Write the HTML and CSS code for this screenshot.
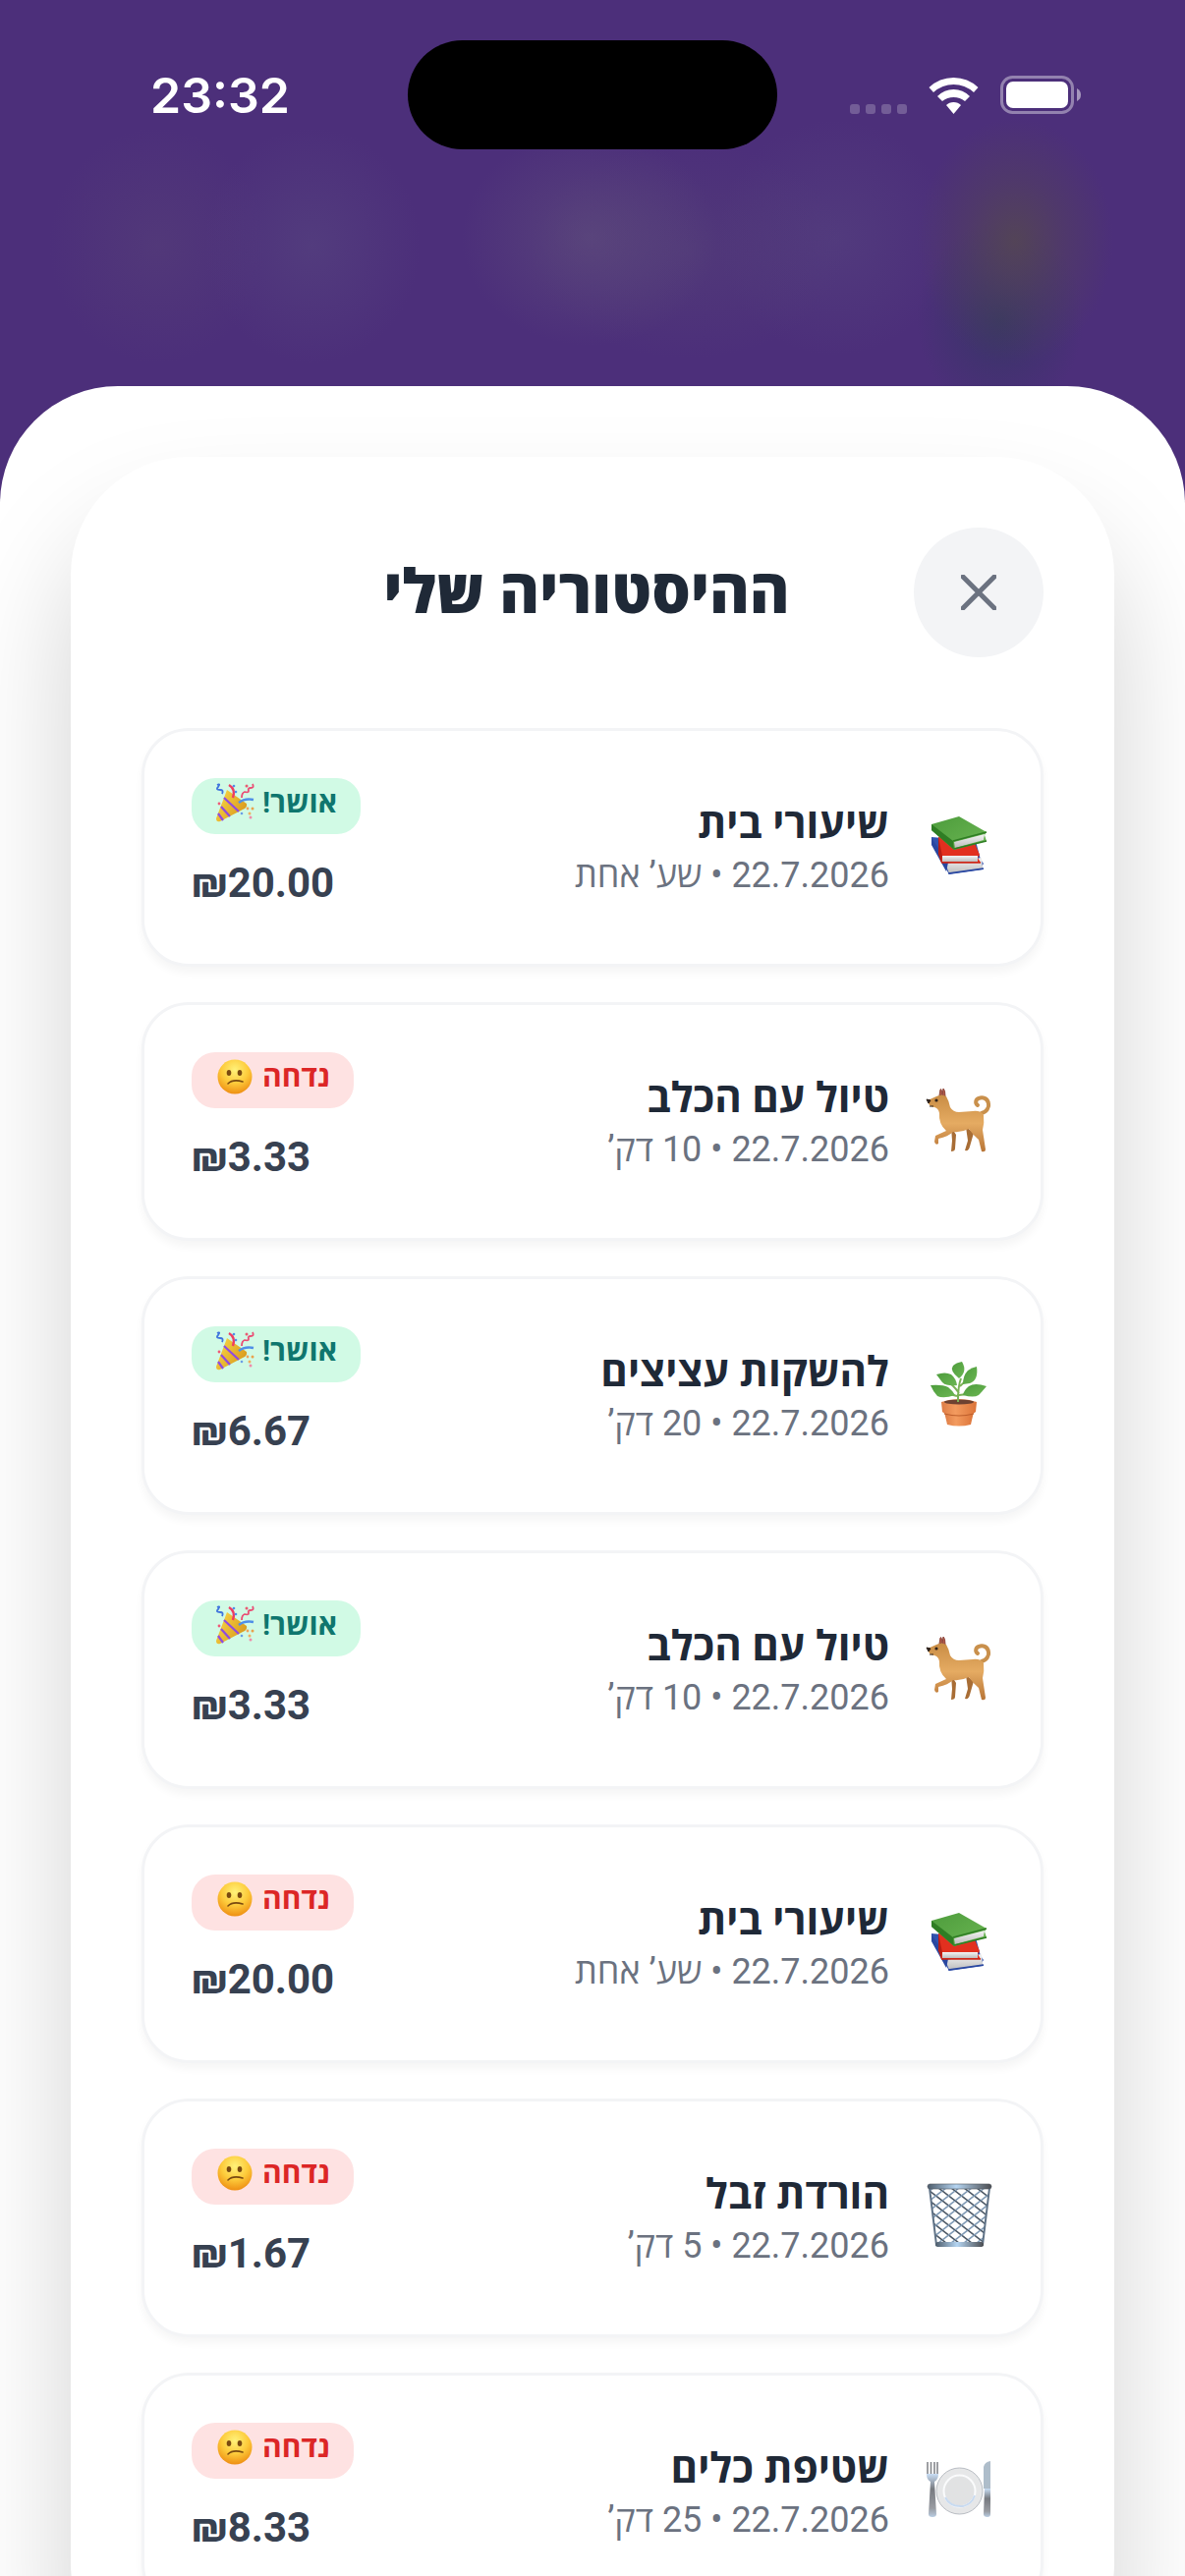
FILE: index.html
```
<!DOCTYPE html>
<html lang="he" dir="rtl">
<head>
    <meta charset="UTF-8">
    <meta name="viewport" content="width=device-width, initial-scale=1.0">
    <title>ההיסטוריה שלי</title>
    <link rel="stylesheet" href="styles.css">
</head>
<body>

<!-- Shared icons -->
<svg class="icon-defs" aria-hidden="true">
    <defs>
        <linearGradient id="gDog" x1="0" y1="0" x2="0" y2="1">
            <stop offset="0" stop-color="#c98d45"/>
            <stop offset="0.5" stop-color="#e5ab62"/>
            <stop offset="1" stop-color="#b87537"/>
        </linearGradient>
        <linearGradient id="gGreen" x1="0" y1="0" x2="1" y2="1">
            <stop offset="0" stop-color="#4d9c3c"/>
            <stop offset="1" stop-color="#6bb653"/>
        </linearGradient>
        <linearGradient id="gPages" x1="0" y1="0" x2="0" y2="1">
            <stop offset="0" stop-color="#f4f4f4"/>
            <stop offset="1" stop-color="#bdbdbd"/>
        </linearGradient>
        <linearGradient id="gPot" x1="0" y1="0" x2="1" y2="0">
            <stop offset="0" stop-color="#dd7c45"/>
            <stop offset="0.4" stop-color="#f39b5f"/>
            <stop offset="1" stop-color="#dc7439"/>
        </linearGradient>
        <linearGradient id="gMetal" x1="0" y1="0" x2="1" y2="0">
            <stop offset="0" stop-color="#4d5c6b"/>
            <stop offset="0.45" stop-color="#b5d5f2"/>
            <stop offset="1" stop-color="#4a4c50"/>
        </linearGradient>
        <linearGradient id="gHandle" x1="0" y1="0" x2="0" y2="1">
            <stop offset="0" stop-color="#c9def5"/>
            <stop offset="0.35" stop-color="#777a80"/>
            <stop offset="0.8" stop-color="#999ca2"/>
            <stop offset="1" stop-color="#b9cde2"/>
        </linearGradient>
        <radialGradient id="gFace" cx="0.5" cy="0.3" r="0.7">
            <stop offset="0" stop-color="#fff27a"/>
            <stop offset="0.55" stop-color="#fdcb3b"/>
            <stop offset="1" stop-color="#ee8f13"/>
        </radialGradient>
        <linearGradient id="gCone" x1="0" y1="0" x2="1" y2="0.6">
            <stop offset="0" stop-color="#fbdc4a"/>
            <stop offset="1" stop-color="#d99a1d"/>
        </linearGradient>
        <pattern id="gMesh" width="13" height="10" patternUnits="userSpaceOnUse">
            <path d="M0 0L13 10" stroke="#4c5865" stroke-width="1.6"/>
            <path d="M13 0L0 10" stroke="#7f9ab5" stroke-width="1.6"/>
        </pattern>
    </defs>

    <symbol id="books" viewBox="0 6 110 110">
        <path d="M28 50L73 54L78 73L81 77L79 80L81 83L46 88L28 57Z" fill="#3252ad"/>
        <path d="M42 77L79 71L80 82L46 87Z" fill="url(#gPages)"/>
        <path d="M28 51L45 76L43 85L28 58Z" fill="#2947a0"/>
        <path d="M45 87L81 82" stroke="#2947a0" stroke-width="1.5"/>
        <path d="M35 50L71 54L77 68L75 71L78 76L38 76L35 66Z" fill="#e2301f"/>
        <path d="M39 69H75V75H39Z" fill="url(#gPages)"/>
        <path d="M35 50L39 69L38 76L35 67Z" fill="#b71d14"/>
        <path d="M38 76H78" stroke="#c92417" stroke-width="1.5"/>
        <path d="M28 37L56 29L84 45L82 48L84 54L51 63L28 43Z" fill="url(#gGreen)"/>
        <path d="M51 55L82 47L81 53L52 61Z" fill="url(#gPages)"/>
        <path d="M28 37L50 54L51 63L28 43Z" fill="#2f7d24"/>
        <path d="M50 54L84 45M51 62L84 54" stroke="#2f7d24" stroke-width="1.5" fill="none"/>
    </symbol>

    <symbol id="dog" viewBox="0 6 110 110">
        <path d="M79 52C84 51 87 46 86 42C85 37 80 35 76 37C73 38 72 42 75 44" fill="none" stroke="#c9904c" stroke-width="4" stroke-linecap="round"/>
        <path d="M36 34L37 28Q38 26 39 33ZM39 34L40 27Q42 28 42 35Z" fill="#b25a49" stroke="#8e463b" stroke-width="1"/>
        <path d="M48 66L53 74L52 88Q52 91 48 91L49 80ZM63 66L71 72L67 86Q66 91 62 90L65 80Z" fill="#a86d35"/>
        <path d="M24 39L33 35Q38 32 43 35Q46 40 47 46Q50 51 56 51L70 50Q78 49 81 54Q82 62 80 69L83 89Q83 92 79 91L76 79Q70 74 66 68Q58 72 50 71Q45 76 35 78L35 83Q32 85 31 81L32 75L43 70Q35 63 36 52Q35 47 31 46Q25 46 24 39Z" fill="url(#gDog)"/>
        <circle cx="33" cy="39" r="1.6" fill="#2c211b"/>
        <path d="M23 38L27 39L25 42ZM26 45L30 45" fill="#2c211b" stroke="#2c211b" stroke-width="1"/>
    </symbol>

    <symbol id="plant" viewBox="0 5 110 110">
        <path d="M55 64Q55 50 58 42M56 57Q49 47 44 46M57 50Q62 46 66 40M56 59Q65 58 70 56M54 60Q46 58 40 56" fill="none" stroke="#7bb256" stroke-width="2"/>
        <path d="M59 25Q65 35 56 42Q46 34 50 29Q53 26 59 25Z" fill="url(#gGreen)"/>
        <path d="M74 30Q76 44 67 47L60 48Q60 39 65 34Q69 31 74 30Z" fill="url(#gGreen)"/>
        <path d="M33 38Q42 35 48 38Q53 42 54 49Q43 50 39 46Z" fill="url(#gGreen)"/>
        <path d="M27 49Q39 48 45 51Q50 55 52 59Q40 63 34 60Q30 56 27 49Z" fill="url(#gGreen)"/>
        <path d="M84 50Q72 46 66 50Q61 54 60 59Q71 62 76 59Q79 56 84 50Z" fill="url(#gGreen)"/>
        <path d="M41 76L44 89Q56 92 68 89L71 76Z" fill="url(#gPot)"/>
        <path d="M38 66Q56 60 74 66L73 76Q70 80 56 80Q42 80 39 76Z" fill="url(#gPot)"/>
        <ellipse cx="56" cy="66" rx="15" ry="2.5" fill="#6e4231"/>
        <path d="M41 78Q56 82 71 78" stroke="#bd5f2c" stroke-width="1.2" fill="none"/>
        <path d="M55 66V58" stroke="#7bb256" stroke-width="2"/>
    </symbol>

    <symbol id="basket" viewBox="0 3 110 110">
        <path d="M26 27L33 85H80L87 27Z" fill="url(#gMesh)" stroke="#5f7286" stroke-width="2"/>
        <rect x="24" y="23" width="65" height="5" rx="2.5" fill="url(#gMetal)" stroke="#515860" stroke-width="0.6"/>
        <rect x="32" y="82" width="49" height="5" rx="2.5" fill="url(#gMetal)"/>
    </symbol>

    <symbol id="plate" viewBox="0 2 110 110">
        <circle cx="56.5" cy="55.5" r="23.5" fill="#e6e7e8" stroke="#b9bdc3" stroke-width="1"/>
        <circle cx="56.5" cy="55.5" r="16" fill="#e1e2e3" stroke="#fafbfc" stroke-width="2"/>
        <path d="M42 62Q47 72 60 71Q69 69 72 60" fill="none" stroke="#c8daf0" stroke-width="2"/>
        <path d="M24 26V39M27.5 26V39M31 26V39M34 26V39" stroke="#85888d" stroke-width="1.6"/>
        <path d="M23 38H35Q35 44 31 46L33 79Q33 82 29 82Q25 82 25 79L27 46Q23 44 23 38Z" fill="url(#gHandle)"/>
        <path d="M81 53V31Q82 26 88 25V53Z" fill="#aebdca"/>
        <path d="M82 53H88V79Q88 82 85 82Q81 82 81 79Z" fill="url(#gHandle)"/>
    </symbol>

    <symbol id="sad" viewBox="0 0 40 40">
        <circle cx="20" cy="20" r="17.5" fill="url(#gFace)"/>
        <ellipse cx="14" cy="16" rx="2.3" ry="3" fill="#7a4a10"/>
        <ellipse cx="25" cy="16" rx="2.3" ry="3" fill="#7a4a10"/>
        <path d="M13 27Q18 22 28 25" fill="none" stroke="#7a4a10" stroke-width="1.6" stroke-linecap="round"/>
    </symbol>

    <symbol id="party" viewBox="0 0 40 40">
        <path d="M12 7L32 21Q33 25 28 27L5 39Q1 40 1 36Z" fill="url(#gCone)"/>
        <path d="M9 15L24 29M6 24L15 34M3 31L8 38" stroke="#8f4be0" stroke-width="2.2"/>
        <path d="M2 2Q6 0 3 4Q0 7 5 7Q9 7 7 11" fill="none" stroke="#3f74dd" stroke-width="1.8"/>
        <path d="M14 2Q21 6 18 15" fill="none" stroke="#ef3d62" stroke-width="2.4"/>
        <path d="M24 20Q30 15 39 17" fill="none" stroke="#4f8fe8" stroke-width="2.4"/>
        <path d="M38 1Q40 5 36 5Q33 5 34 8Q34 10 30 9Q27 10 27 15" fill="none" stroke="#ea4d74" stroke-width="1.8"/>
        <circle cx="32" cy="3" r="1.5" fill="#e85c72"/>
        <circle cx="19" cy="3" r="1.3" fill="#4f8fe8"/>
        <circle cx="4" cy="21" r="1.4" fill="#ef5a78"/>
        <circle cx="21" cy="9" r="1.3" fill="#4f8fe8"/>
        <circle cx="33" cy="26" r="1.4" fill="#efa25b"/>
        <circle cx="38" cy="26" r="1.5" fill="#e9a24d"/>
        <circle cx="27" cy="31" r="1.3" fill="#6b9fe6"/>
        <circle cx="35" cy="31" r="1.5" fill="#f0b061"/>
        <circle cx="36" cy="35" r="1.5" fill="#ef8cab"/>
    </symbol>
</svg>

<div class="screen">
    <header class="status-bar" dir="ltr">
        <span class="time">23:32</span>
        <span class="island"></span>
        <div class="indicators">
            <svg class="cellular" viewBox="0 0 58 10">
                <rect width="10" height="10" rx="3"/>
                <rect x="16" width="10" height="10" rx="3"/>
                <rect x="32" width="10" height="10" rx="3"/>
                <rect x="48" width="10" height="10" rx="3"/>
            </svg>
            <svg class="wifi" viewBox="0 0 51 38">
                <path d="M0.5 11Q11 1 25.5 1T50.5 11L46 16Q37 8 25.5 8T5 16Z"/>
                <path d="M9 20Q16 13 25.5 13T42 20L37 25Q32 21 25.5 21T14 25Z"/>
                <path d="M18 29Q21 26 25.5 26T33 29L25.5 38Z"/>
            </svg>
            <svg class="battery" viewBox="0 0 82 39">
                <rect x="1.5" y="1.5" width="72" height="36" rx="11" fill="none" stroke="#fff" stroke-opacity="0.4" stroke-width="3"/>
                <rect x="6" y="6" width="63" height="27" rx="7"/>
                <path d="M78 13Q82 15 82 19.5T78 26Z" fill-opacity="0.5"/>
            </svg>
        </div>
    </header>

    <main class="sheet">
        <section class="panel">
            <div class="panel-header">
                <button class="close-btn" type="button" aria-label="סגירה">
                    <svg viewBox="0 0 36 36"><path d="M2 2L34 34M34 2L2 34"/></svg>
                </button>
                <h1>ההיסטוריה שלי</h1>
                <span class="header-spacer"></span>
            </div>

            <ul class="history">
                <li class="task">
                    <svg class="task-icon"><use href="#books"/></svg>
                    <div class="task-info">
                        <h2>שיעורי בית</h2>
                        <p>22.7.2026 • שע’ אחת</p>
                    </div>
                    <div class="task-result">
                        <span class="badge approved">אושר! <svg><use href="#party"/></svg></span>
                        <span class="amount">₪20.00</span>
                    </div>
                </li>
                <li class="task">
                    <svg class="task-icon"><use href="#dog"/></svg>
                    <div class="task-info">
                        <h2>טיול עם הכלב</h2>
                        <p>22.7.2026 • 10 דק’</p>
                    </div>
                    <div class="task-result">
                        <span class="badge rejected">נדחה <svg><use href="#sad"/></svg></span>
                        <span class="amount">₪3.33</span>
                    </div>
                </li>
                <li class="task">
                    <svg class="task-icon"><use href="#plant"/></svg>
                    <div class="task-info">
                        <h2>להשקות עציצים</h2>
                        <p>22.7.2026 • 20 דק’</p>
                    </div>
                    <div class="task-result">
                        <span class="badge approved">אושר! <svg><use href="#party"/></svg></span>
                        <span class="amount">₪6.67</span>
                    </div>
                </li>
                <li class="task">
                    <svg class="task-icon"><use href="#dog"/></svg>
                    <div class="task-info">
                        <h2>טיול עם הכלב</h2>
                        <p>22.7.2026 • 10 דק’</p>
                    </div>
                    <div class="task-result">
                        <span class="badge approved">אושר! <svg><use href="#party"/></svg></span>
                        <span class="amount">₪3.33</span>
                    </div>
                </li>
                <li class="task">
                    <svg class="task-icon"><use href="#books"/></svg>
                    <div class="task-info">
                        <h2>שיעורי בית</h2>
                        <p>22.7.2026 • שע’ אחת</p>
                    </div>
                    <div class="task-result">
                        <span class="badge rejected">נדחה <svg><use href="#sad"/></svg></span>
                        <span class="amount">₪20.00</span>
                    </div>
                </li>
                <li class="task">
                    <svg class="task-icon"><use href="#basket"/></svg>
                    <div class="task-info">
                        <h2>הורדת זבל</h2>
                        <p>22.7.2026 • 5 דק’</p>
                    </div>
                    <div class="task-result">
                        <span class="badge rejected">נדחה <svg><use href="#sad"/></svg></span>
                        <span class="amount">₪1.67</span>
                    </div>
                </li>
                <li class="task">
                    <svg class="task-icon"><use href="#plate"/></svg>
                    <div class="task-info">
                        <h2>שטיפת כלים</h2>
                        <p>22.7.2026 • 25 דק’</p>
                    </div>
                    <div class="task-result">
                        <span class="badge rejected">נדחה <svg><use href="#sad"/></svg></span>
                        <span class="amount">₪8.33</span>
                    </div>
                </li>
            </ul>
        </section>
    </main>
</div>

</body>
</html>
```
FILE: styles.css
```
* {
    box-sizing: border-box;
}
body {
    margin: 0;
    font-family: Roboto, "Open Sans", "DejaVu Sans", sans-serif;
    color: #1f2937;
}
h1, h2, p, ul {
    margin: 0;
    padding: 0;
}
.icon-defs {
    position: absolute;
    width: 0;
    height: 0;
}
.screen {
    display: flex;
    flex-direction: column;
    height: 100vh;
    overflow: hidden;
    /* blurred app header behind the sheet */
    background:
        radial-gradient(100px 125px at 1033px 245px, rgba(84, 70, 84, 0.9), rgba(84, 70, 84, 0.4) 50%, transparent),
        radial-gradient(85px 100px at 1018px 325px, rgba(48, 55, 95, 0.8), rgba(48, 55, 95, 0.35) 50%, transparent),
        radial-gradient(130px 110px at 600px 242px, rgba(100, 85, 125, 0.5), transparent),
        radial-gradient(160px 110px at 700px 255px, rgba(90, 75, 120, 0.35), transparent),
        radial-gradient(120px 120px at 850px 242px, rgba(90, 75, 130, 0.4), transparent),
        radial-gradient(110px 120px at 160px 250px, rgba(90, 70, 120, 0.4), transparent),
        radial-gradient(110px 120px at 318px 250px, rgba(90, 75, 130, 0.45), transparent),
        #4c2f7a;
}

/* status bar */
.status-bar {
    flex: none;
    display: grid;
    grid-template-columns: 1fr 376px 1fr;
    align-items: center;
    height: 393px;
    padding: 41px 106px 241px;
    color: #fff;
}
.time {
    padding-left: 47px;
    font-family: Inter, sans-serif;
    font-size: 50px;
    font-weight: 600;
    line-height: 60px;
}
.island {
    height: 111px;
    border-radius: 56px;
    background: #000;
}
.indicators {
    display: flex;
    justify-content: flex-end;
    align-items: center;
    gap: 22px;
}
.indicators svg {
    fill: #fff;
}
.cellular {
    width: 58px;
    height: 10px;
    margin-top: 28px;
    opacity: 0.22;
}
.wifi {
    width: 51px;
    height: 38px;
}
.battery {
    width: 82px;
    height: 39px;
}

/* sheet */
.sheet {
    flex: 1 0 auto;
    padding: 72px;
    border-radius: 120px 120px 0 0;
    background: #fff;
    overflow: hidden;
}
.panel {
    padding: 72px;
    border-radius: 120px;
    background: #fff;
    box-shadow: 0 75px 120px rgba(0, 0, 0, 0.18);
}
.panel-header {
    display: flex;
    justify-content: space-between;
    align-items: center;
    margin-bottom: 72px;
}
.panel-header h1 {
    font-size: 62px;
    font-weight: 800;
    line-height: 72px;
}
.header-spacer {
    width: 120px;
}
.close-btn {
    display: flex;
    justify-content: center;
    align-items: center;
    width: 132px;
    height: 132px;
    padding: 0;
    border: none;
    border-radius: 50%;
    background: #f3f4f6;
    cursor: pointer;
}
.close-btn svg {
    width: 36px;
    height: 36px;
    fill: none;
    stroke: #6b7280;
    stroke-width: 5;
    stroke-linecap: round;
}

/* history list */
.history {
    display: flex;
    flex-direction: column;
    gap: 36px;
    list-style: none;
}
.task {
    display: flex;
    align-items: center;
    gap: 34px;
    height: 243px;
    padding: 48px;
    border: 3px solid #f3f4f6;
    border-radius: 48px;
    background: #fff;
    box-shadow: 0 6px 9px rgba(0, 0, 0, 0.04);
}
.task-icon {
    width: 110px;
    height: 110px;
    margin: 0 -19px;
}
.task-info {
    flex: 1;
    padding-top: 3px;
}
.task-info h2 {
    font-size: 42px;
    font-weight: 700;
    line-height: 54px;
}
.task-info p {
    color: #6b7280;
    font-size: 36px;
    line-height: 51px;
}
.task-result {
    display: flex;
    flex-direction: column;
    align-items: flex-end;
    align-self: flex-start;
    gap: 23px;
}
.badge {
    display: flex;
    align-items: center;
    gap: 8px;
    height: 57px;
    padding: 0 24px 7px;
    border-radius: 24px;
    font-size: 30px;
    font-weight: 700;
    line-height: 50px;
}
.badge svg {
    width: 40px;
    height: 40px;
}
.approved {
    background: #d1fae5;
    color: #0f766e;
}
.rejected {
    background: #fee2e2;
    color: #dc2626;
}
.amount {
    color: #374151;
    font-size: 42px;
    font-weight: 700;
    line-height: 54px;
}
```
